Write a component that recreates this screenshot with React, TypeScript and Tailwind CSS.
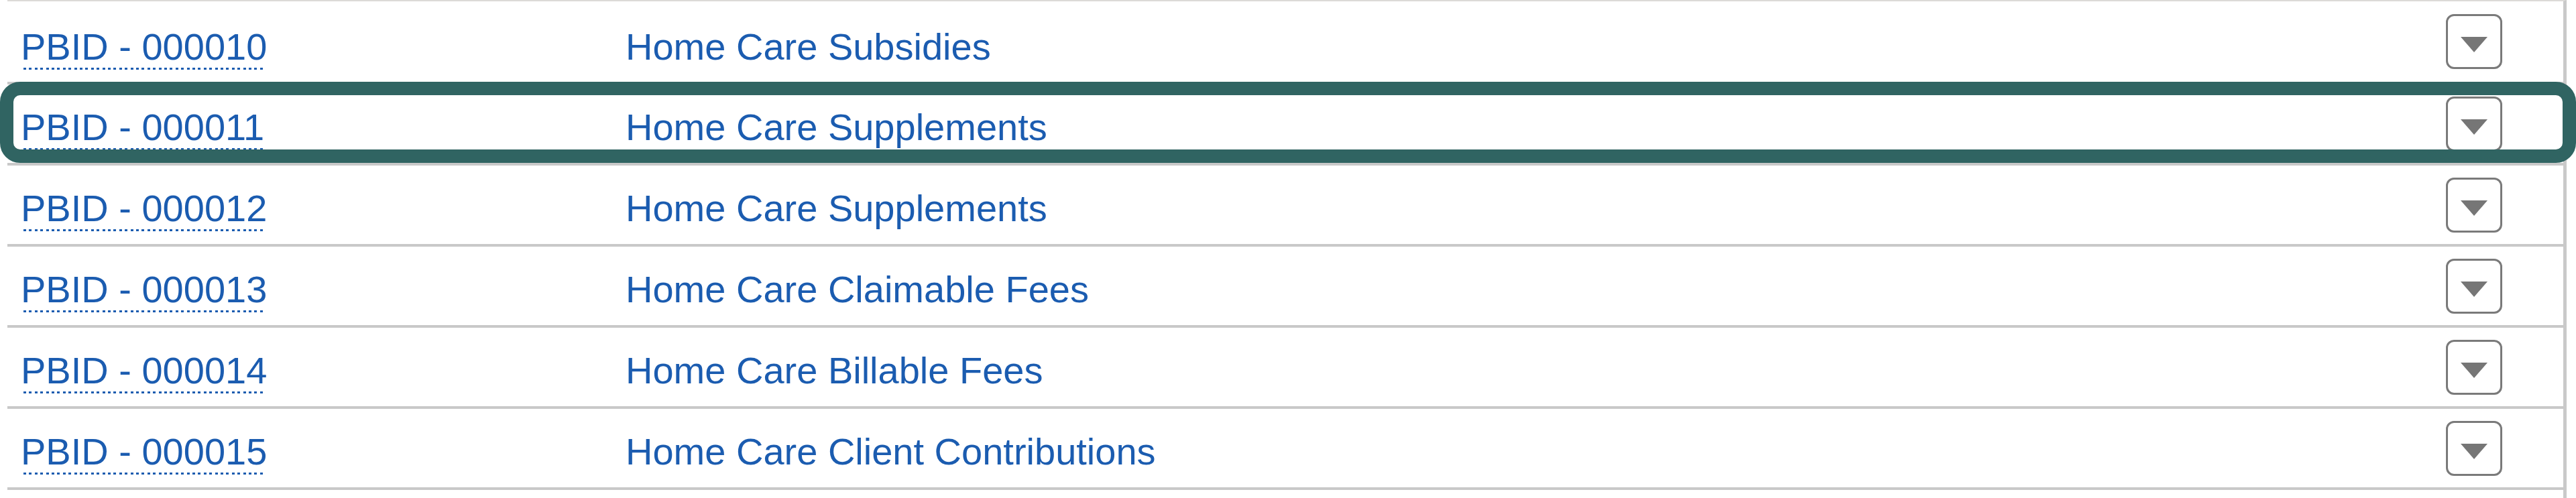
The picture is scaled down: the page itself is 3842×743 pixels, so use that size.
import React from "react";

interface Row {
  id: string;
  name: string;
}

const rows: Row[] = [
  { id: "PBID - 000010", name: "Home Care Subsidies" },
  { id: "PBID - 000011", name: "Home Care Supplements" },
  { id: "PBID - 000012", name: "Home Care Supplements" },
  { id: "PBID - 000013", name: "Home Care Claimable Fees" },
  { id: "PBID - 000014", name: "Home Care Billable Fees" },
  { id: "PBID - 000015", name: "Home Care Client Contributions" },
];

const MenuButton: React.FC = () => (
  <button
    type="button"
    className="w-[84px] h-[82px] shrink-0 rounded-[12px] border-[3px] border-[#7a7a7a] bg-white flex items-center justify-center pt-[9px]"
  >
    <svg width="40" height="23" viewBox="0 0 40 23">
      <polygon points="0,0 40,0 20,23" fill="#767676" />
    </svg>
  </button>
);

const TableRow: React.FC<{ row: Row; first: boolean; selected: boolean }> = ({ row, first, selected }) => {
  const textOffset = first ? "mt-[16px]" : "mt-[11px]";
  return (
    <div
      className={`relative flex items-center border-b-4 border-[#c9c9c9] ${first ? "h-[124px]" : "h-[121px]"}`}
    >
      <div className={`w-[922px] shrink-0 pl-[20px] ${textOffset}`}>
        <a href="#" className="inline-flex flex-col text-[#1b5cb0]">
          <span className="leading-[62px]">{row.id}</span>
          <span className="ml-[4px] mr-[2px] h-[3px] bg-[repeating-linear-gradient(to_right,#1b5cb0_0_4px,transparent_4px_8.4px)]" />
        </a>
      </div>
      <div className={`flex-1 ${textOffset}`}>
        <a href="#" className="inline-flex flex-col text-[#1b5cb0]">
          <span className="leading-[62px]">{row.name}</span>
          <span className="h-[3px]" />
        </a>
      </div>
      <div className="mr-[91px]">
        <MenuButton />
      </div>
      {selected && (
        <div className="pointer-events-none absolute -top-[4px] bottom-0 -left-[11px] -right-[19px] rounded-[30px] border-[20px] border-[#306462]" />
      )}
    </div>
  );
};

export default function App() {
  return (
    <div
      className="w-[3842px] h-[743px] overflow-hidden bg-white text-[56px]"
      style={{ fontFamily: '"Liberation Sans", Arial, sans-serif' }}
    >
      <div className="ml-[11px] w-[3817px] h-full border-t-2 border-t-[#dcdad7] border-r-[5px] border-r-[#c9c9c9]">
        {rows.map((row, i) => (
          <TableRow key={row.id} row={row} first={i === 0} selected={i === 1} />
        ))}
      </div>
    </div>
  );
}
